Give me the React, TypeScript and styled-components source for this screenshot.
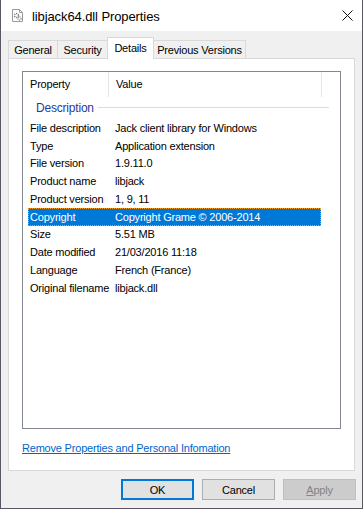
import React from 'react';
import styled, { createGlobalStyle } from 'styled-components';

const GlobalStyle = createGlobalStyle`
  html, body {
    margin: 0;
    padding: 0;
    background: #fff;
  }
  * {
    box-sizing: border-box;
  }
`;

const Window = styled.div`
  width: 363px;
  height: 509px;
  display: flex;
  flex-direction: column;
  background: #f0f0f0;
  border: 1px solid #5c5566;
  border-top: none;
  font-family: "Liberation Sans", Arial, sans-serif;
  font-size: 11px;
  letter-spacing: -0.2px;
  color: #000;
`;

const TitleBar = styled.div`
  height: 31px;
  flex: 0 0 31px;
  display: flex;
  align-items: center;
  background: #fff;
  padding-left: 11px;
  gap: 8px;
`;

const TitleText = styled.span`
  font-size: 13px;
  letter-spacing: -0.1px;
  margin-top: 1px;
`;

const CloseButton = styled.div`
  margin-left: auto;
  margin-right: 9px;
  width: 11px;
  height: 11px;
  display: flex;
`;

const Body = styled.div`
  flex: 1;
  display: flex;
  flex-direction: column;
  padding: 6px 7px 0 7px;
`;

const TabRow = styled.div`
  display: flex;
  align-items: flex-end;
  height: 22px;
  margin-bottom: -1px;
  position: relative;
  z-index: 1;
`;

const Tab = styled.div<{ $active?: boolean; $w: number }>`
  width: ${(p) => p.$w}px;
  height: ${(p) => (p.$active ? 22 : 18)}px;
  margin-bottom: ${(p) => (p.$active ? 0 : 1)}px;
  background: ${(p) => (p.$active ? '#fff' : '#f0f0f0')};
  border: 1px solid #d9d9d9;
  border-bottom: none;
  display: flex;
  align-items: center;
  justify-content: center;
  padding-bottom: ${(p) => (p.$active ? 2 : 0)}px;
  position: relative;
  z-index: ${(p) => (p.$active ? 2 : 1)};
  & + & {
    margin-left: -1px;
  }
`;

const Panel = styled.div`
  flex: 0 0 413px;
  width: 347px;
  background: #fff;
  border: 1px solid #d9d9d9;
  padding: 12px 13px 0 13px;
  display: flex;
  flex-direction: column;
`;

const List = styled.div`
  height: 358px;
  border: 1px solid #828790;
  display: flex;
  flex-direction: column;
  overflow: hidden;
`;

const Header = styled.div`
  height: 25px;
  flex: 0 0 25px;
  display: flex;
`;

const HeaderCell = styled.div<{ $w: number }>`
  width: ${(p) => p.$w}px;
  display: flex;
  align-items: center;
  padding-left: 7px;
  padding-bottom: 1px;
  border-right: 1px solid #e5e5e5;
`;

const Group = styled.div`
  height: 22px;
  flex: 0 0 22px;
  display: flex;
  align-items: center;
  gap: 4px;
  padding-left: 13px;
  padding-right: 11px;
  color: #1e3c9c;
  font-size: 12px;
  letter-spacing: -0.2px;
`;

const GroupLine = styled.div`
  flex: 1;
  height: 1px;
  background: #d5dcec;
  margin-top: -1px;
`;

const Row = styled.div<{ $selected?: boolean }>`
  display: grid;
  grid-template-columns: 85px 1fr;
  align-items: center;
  height: 17.75px;
  flex: 0 0 17.75px;
  width: 293px;
  margin-left: 5px;
  padding-left: 1px;
  white-space: nowrap;
  border: 1px ${(p) => (p.$selected ? 'dotted #f59a23' : 'solid transparent')};
  background: ${(p) => (p.$selected ? '#0078d7' : 'transparent')};
  color: ${(p) => (p.$selected ? '#fff' : '#000')};
`;

const Link = styled.a`
  margin-top: 13px;
  line-height: 13px;
  color: #0066cc;
  text-decoration: underline;
  cursor: pointer;
`;

const ButtonRow = styled.div`
  display: flex;
  justify-content: flex-end;
  gap: 8px;
  margin-top: 8px;
  margin-right: -1px;
`;

const Button = styled.button<{ $default?: boolean }>`
  width: 73px;
  height: 21px;
  padding: 0;
  font-family: inherit;
  font-size: 11px;
  letter-spacing: -0.2px;
  color: #000;
  background: #e1e1e1;
  border: ${(p) => (p.$default ? '2px solid #0078d7' : '1px solid #adadad')};
  &:disabled {
    background: #cccccc;
    border-color: #bfbfbf;
    color: #838383;
  }
`;

const AccessKey = styled.span`
  text-decoration: underline;
`;

const DllIcon = () => (
  <svg width="12" height="13" viewBox="0 0 12 13">
    <path d="M0.5 0.5h7l3 3v9h-10z" fill="#fff" stroke="#9a9a9a" />
    <path d="M7.5 0.5v3h3" fill="none" stroke="#9a9a9a" />
    <circle cx="4.5" cy="6.5" r="2" fill="none" stroke="#7d7d7d" strokeWidth="1.4" strokeDasharray="1.2 0.8" />
    <circle cx="7.5" cy="9.5" r="1.6" fill="none" stroke="#8d8d8d" strokeWidth="1.2" strokeDasharray="1 0.7" />
  </svg>
);

const rows: Array<{ name: string; value: string; selected?: boolean }> = [
  { name: 'File description', value: 'Jack client library for Windows' },
  { name: 'Type', value: 'Application extension' },
  { name: 'File version', value: '1.9.11.0' },
  { name: 'Product name', value: 'libjack' },
  { name: 'Product version', value: '1, 9, 11' },
  { name: 'Copyright', value: 'Copyright Grame \u00a9 2006-2014', selected: true },
  { name: 'Size', value: '5.51 MB' },
  { name: 'Date modified', value: '21/03/2016 11:18' },
  { name: 'Language', value: 'French (France)' },
  { name: 'Original filename', value: 'libjack.dll' },
];

const tabs = [
  { label: 'General', w: 50 },
  { label: 'Security', w: 51 },
  { label: 'Details', w: 47, active: true },
  { label: 'Previous Versions', w: 93 },
];

const App: React.FC = () => {
  return (
    <>
      <GlobalStyle />
      <Window>
        <TitleBar>
          <DllIcon />
          <TitleText>libjack64.dll Properties</TitleText>
          <CloseButton>
            <svg width="11" height="11" viewBox="0 0 11 11">
              <path d="M0.5 0.5l10 10M10.5 0.5l-10 10" stroke="#111" strokeWidth="1" />
            </svg>
          </CloseButton>
        </TitleBar>
        <Body>
          <TabRow>
            {tabs.map((t) => (
              <Tab key={t.label} $w={t.w} $active={t.active}>
                {t.label}
              </Tab>
            ))}
          </TabRow>
          <Panel>
            <List>
              <Header>
                <HeaderCell $w={86}>Property</HeaderCell>
                <HeaderCell $w={213}>Value</HeaderCell>
              </Header>
              <Group>
                <span>Description</span>
                <GroupLine />
              </Group>
              {rows.map((r) => (
                <Row key={r.name} $selected={r.selected}>
                  <span>{r.name}</span>
                  <span>{r.value}</span>
                </Row>
              ))}
            </List>
            <Link>Remove Properties and Personal Infomation</Link>
          </Panel>
          <ButtonRow>
            <Button $default>OK</Button>
            <Button>Cancel</Button>
            <Button disabled>
              <AccessKey>A</AccessKey>pply
            </Button>
          </ButtonRow>
        </Body>
      </Window>
    </>
  );
};

export default App;
